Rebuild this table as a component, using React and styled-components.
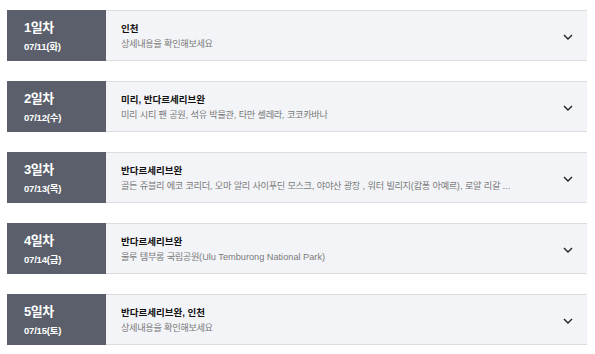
import React from 'react';
import styled, { createGlobalStyle } from 'styled-components';

const GlobalStyle = createGlobalStyle`
  body {
    margin: 0;
    background: #fff;
    font-family: "Liberation Sans", "Noto Sans CJK KR", sans-serif;
  }
`;

const days = [
  { day: '1일차', date: '07/11(화)', title: '인천', desc: '상세내용을 확인해보세요' },
  { day: '2일차', date: '07/12(수)', title: '미리, 반다르세리브완', desc: '미리 시티 팬 공원, 석유 박물관, 타만 셀레라, 코코카바나' },
  { day: '3일차', date: '07/13(목)', title: '반다르세리브완', desc: '골든 쥬블리 에코 코리더, 오마 알리 사이푸딘 모스크, 야야산 광장 , 워터 빌리지(캄퐁 아예르), 로얄 리갈 ...' },
  { day: '4일차', date: '07/14(금)', title: '반다르세리브완', desc: '울루 템부롱 국립공원(Ulu Temburong National Park)' },
  { day: '5일차', date: '07/15(토)', title: '반다르세리브완, 인천', desc: '상세내용을 확인해보세요' },
];

const List = styled.div`
  display: flex;
  flex-direction: column;
  gap: 20px;
  padding: 10px 8px 0 7px;
`;

const Row = styled.div`
  display: flex;
  height: 51px;
  background: #f3f4f7;
`;

const DayBox = styled.div`
  width: 99px;
  flex-shrink: 0;
  background: #5b5f6b;
  color: #fff;
  display: flex;
  flex-direction: column;
  justify-content: center;
  padding: 2px 0 0 17px;
  box-sizing: border-box;
`;

const DayNum = styled.div`
  font-size: 13px;
  font-weight: 700;
  line-height: 18px;
  letter-spacing: -0.5px;
`;

const DayDate = styled.div`
  font-size: 9.5px;
  font-weight: 700;
  line-height: 14px;
  margin-top: 3px;
  letter-spacing: -0.2px;
`;

const Content = styled.div`
  flex: 1;
  display: flex;
  align-items: center;
  border-top: 1px solid #dcdde1;
  border-bottom: 1px solid #dcdde1;
  padding: 2px 14px 0 15px;
  min-width: 0;
`;

const Texts = styled.div`
  flex: 1;
  min-width: 0;
`;

const Title = styled.div`
  font-size: 9.5px;
  font-weight: 700;
  color: #111;
  line-height: 14px;
`;

const Desc = styled.div`
  font-size: 9.2px;
  color: #7a7a7a;
  line-height: 14px;
  margin-top: 1px;
  white-space: nowrap;
  overflow: hidden;
`;

const Hangul = styled.span`
  letter-spacing: ${(p) => p.$tight}px;
`;

// hangul runs are set a bit tighter than latin
const Text = ({ children, tight = -0.35 }) =>
  children.split(/([\uAC00-\uD7A3]+)/).map((part, i) =>
    /[\uAC00-\uD7A3]/.test(part) ? (
      <Hangul key={i} $tight={tight}>{part}</Hangul>
    ) : (
      part
    )
  );

const Chevron = () => (
  <svg width="10" height="6" viewBox="0 0 10 6" fill="none">
    <path d="M1 1l4 4 4-4" stroke="#222" strokeWidth="1.4" />
  </svg>
);

export default function App() {
  return (
    <>
      <GlobalStyle />
      <List>
        {days.map((d) => (
          <Row key={d.day}>
            <DayBox>
              <DayNum>{d.day}</DayNum>
              <DayDate>{d.date}</DayDate>
            </DayBox>
            <Content>
              <Texts>
                <Title><Text tight={0}>{d.title}</Text></Title>
                <Desc><Text>{d.desc}</Text></Desc>
              </Texts>
              <Chevron />
            </Content>
          </Row>
        ))}
      </List>
    </>
  );
}
